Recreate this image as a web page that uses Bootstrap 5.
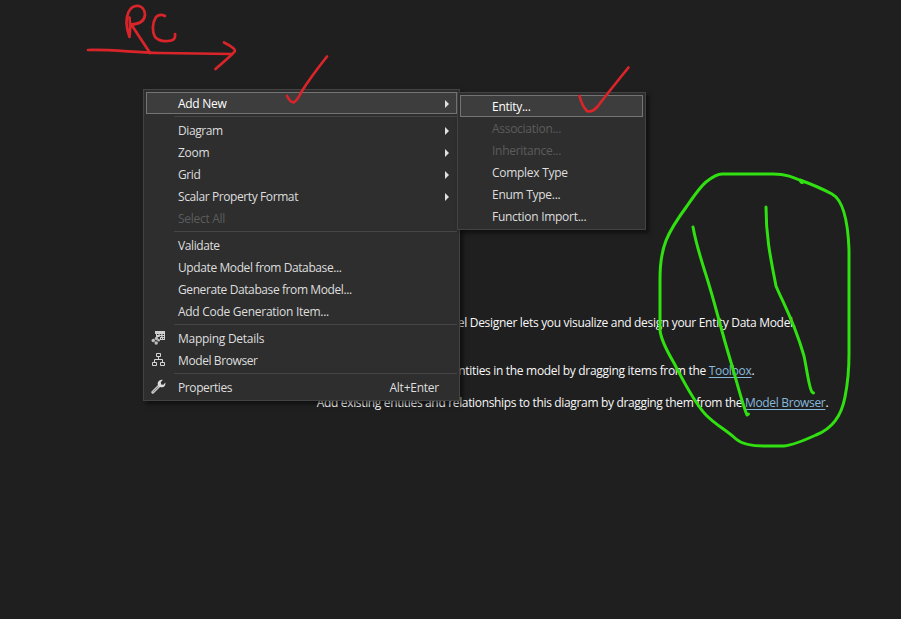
<!DOCTYPE html>
<html lang="en">
<head>
<meta charset="utf-8">
<meta name="viewport" content="width=device-width, initial-scale=1">
<title>Entity Data Model Designer</title>
<link href="https://cdn.jsdelivr.net/npm/bootstrap@5.3.0/dist/css/bootstrap.min.css" rel="stylesheet">
<style>
body{background:#1f1f1f;color:#f8f8f8;font:12px/22px "Open Sans","Noto Sans",sans-serif;height:619px}
.surface{width:901px;height:619px}
.hint{width:620px;margin-left:263px;padding-top:312px;letter-spacing:-.31px;white-space:nowrap}
.hint p{line-height:22px}
.hint .intro{margin-bottom:26px!important}
.hint .tip{margin-bottom:10px!important;padding-right:3px}
.hint .tip-last{letter-spacing:-.34px;padding-right:1px}
.hint a{color:#87b9dd;text-underline-offset:2px}
.ctx{position:absolute;background:#2e2e2e;border:1px solid #434343;padding:2px;box-shadow:3px 3px 4px rgba(0,0,0,.5)}
.ctx-main{left:143px;top:89px;width:317px}
.ctx-sub{left:457px;top:92px;width:189px}
.entry{height:22px;padding:2px 7px 0 0;border:1px solid transparent;color:#dedede;line-height:20px;letter-spacing:-.4px;white-space:nowrap}
.entry.airy,.ctx-sub .entry{letter-spacing:-.28px}
.entry.hot{background:#3d3d3d;border-color:#747474;color:#fff}
.entry.off{color:#5c5c5c}
.gutter{width:31px;height:20px;flex:none}
.gutter svg{display:block;margin:1px 0 0 4px}
.arrow{width:0;height:0;border:4px solid transparent;border-left-color:#e0e0e0;border-right:0}
.rule{height:1px;margin:2px 0 2px 28px;background:#454545}
.keys{margin-right:10px;letter-spacing:-.24px}
.ink{left:0;top:0;pointer-events:none}
</style>
<script src="https://cdn.jsdelivr.net/npm/bootstrap@5.3.0/dist/js/bootstrap.bundle.min.js"></script>
</head>
<body class="m-0 overflow-hidden">
<main class="surface position-relative overflow-hidden">
  <section class="hint text-center">
    <p class="intro"><span>The Entity Data Model Designer lets you visualize and design your Entity Data Model.</span></p>
    <p class="tip"><span>Create new entities in the model by dragging items from the <a href="#">Toolbox</a>.</span></p>
    <p class="tip-last mb-0"><span>Add existing entities and relationships to this diagram by dragging them from the <a href="#">Model Browser</a>.</span></p>
  </section>

  <div class="ctx ctx-main" role="menu">
    <div class="entry airy hot d-flex align-items-center"><span class="gutter"></span><span class="me-auto">Add New</span><i class="arrow"></i></div>
    <div class="rule"></div>
    <div class="entry d-flex align-items-center"><span class="gutter"></span><span class="me-auto">Diagram</span><i class="arrow"></i></div>
    <div class="entry airy d-flex align-items-center"><span class="gutter"></span><span class="me-auto">Zoom</span><i class="arrow"></i></div>
    <div class="entry d-flex align-items-center"><span class="gutter"></span><span class="me-auto">Grid</span><i class="arrow"></i></div>
    <div class="entry d-flex align-items-center"><span class="gutter"></span><span class="me-auto">Scalar Property Format</span><i class="arrow"></i></div>
    <div class="entry airy off d-flex align-items-center"><span class="gutter"></span><span>Select All</span></div>
    <div class="rule"></div>
    <div class="entry d-flex align-items-center"><span class="gutter"></span><span>Validate</span></div>
    <div class="entry d-flex align-items-center"><span class="gutter"></span><span>Update Model from Database...</span></div>
    <div class="entry d-flex align-items-center"><span class="gutter"></span><span>Generate Database from Model...</span></div>
    <div class="entry airy d-flex align-items-center"><span class="gutter"></span><span>Add Code Generation Item...</span></div>
    <div class="rule"></div>
    <div class="entry airy d-flex align-items-center"><span class="gutter"><svg width="16" height="16" viewBox="0 0 16 16"><path fill="#d0d0d0" d="M4 1h10v9H9V7H5V4H4z"/><path fill="#2e2e2e" d="M6 4h1.500v1H6zM8.700 4h1.500v1H8.700zM11.500 4h1.500v1h-1.500zM8.700 6h1.500v1H8.700zM11.500 6h1.500v1h-1.500zM10 8h1v1h-1zM12 8h1v1h-1z"/><g fill="#bdbdbd"><circle cx="2.300" cy="10.500" r="1.800"/><circle cx="5.500" cy="8.500" r="1.700"/><circle cx="7.700" cy="10.300" r="1.300"/><circle cx="5.200" cy="13" r="1.700"/></g></svg></span><span>Mapping Details</span></div>
    <div class="entry d-flex align-items-center"><span class="gutter"><svg width="16" height="16" viewBox="0 0 16 16" fill="none" stroke="#d6d6d6"><path d="M5.500 1.500h4v3h-4zM1.500 10.500h4v3h-4zM9.500 10.500h4v3h-4zM7.500 5v3M3.500 10V7.500h8V10"/></svg></span><span>Model Browser</span></div>
    <div class="rule"></div>
    <div class="entry d-flex align-items-center"><span class="gutter"><svg width="16" height="16" viewBox="0 0 16 16"><path d="M1.800 13.200 8 7" stroke="#c8c8c8" stroke-width="3" stroke-linecap="round"/><path d="M2 13 7.500 7.500" stroke="#777" stroke-width=".8"/><path fill="#dedede" d="M11.800.9 9.800 3.100l.3 2.400 2.300.2L14.300 3.500c.6 2.800-1.400 5.200-4.200 4.800C7.500 8 6 5.600 7 3.300 7.800 1.400 9.800.4 11.800.9z"/></svg></span><span class="me-auto">Properties</span><span class="keys">Alt+Enter</span></div>
  </div>

  <div class="ctx ctx-sub" role="menu">
    <div class="entry hot d-flex align-items-center"><span class="gutter"></span><span>Entity...</span></div>
    <div class="entry off d-flex align-items-center"><span class="gutter"></span><span>Association...</span></div>
    <div class="entry off d-flex align-items-center"><span class="gutter"></span><span>Inheritance...</span></div>
    <div class="entry d-flex align-items-center"><span class="gutter"></span><span>Complex Type</span></div>
    <div class="entry d-flex align-items-center"><span class="gutter"></span><span>Enum Type...</span></div>
    <div class="entry d-flex align-items-center"><span class="gutter"></span><span>Function Import...</span></div>
  </div>

  <!-- Pen annotations over the designer -->
  <svg class="ink position-absolute" width="901" height="619" viewBox="0 0 901 619" fill="none" stroke-linecap="round" stroke-linejoin="round">
    <g stroke="#d92529" stroke-width="2.700">
      <path d="M88 50C113 49.500 129 52 160 53L232 54"/>
      <path d="M224 42.500Q235 48 235 51Q233 54 215.500 69"/>
      <path d="M129.500 17.500Q131 27 129.500 37Q124 22 128.500 12Q132 5 139 6Q145 8 145 15Q144 24 131 24.500M131 24L150 53"/>
      <path d="M165 16Q160 13.500 156 17C152 23 152 31 155 37Q160 42 168 41Q176 41 175 34"/>
      <path d="M287 96Q290 102 293.500 102.500Q297 101 302 91Q310 78 327 56.500"/>
      <path d="M579.500 96Q582 106 587 111Q592 113 598 106Q607 94 628.500 67.500"/>
    </g>
    <g stroke="#30e010" stroke-width="3">
      <path d="M804 182C793 177 786 174 773 174H722Q716 174 706 182Q700 187 687 206C667 233 660 247 660 279V330Q661 341 674 363C683 380 693 401 706 415C717 426 725 429 736 439Q744 446 764 446H784Q794 445 816 435C834 428 842 413 845 397Q849 377 849 354V250C848 221 843 200 832 194Q819 187 800 180"/>
      <path d="M801 181L802 182" stroke-width="4"/>
      <path d="M693 227C696 244 700 256 706 275C715 303 720 326 730 359C737 382 742 403 747 415L748.500 414"/>
      <path d="M766 207C766 238 771 260 776 286C783 303 794 321 804 356C807 370 809 388 812 392L813.500 393"/>
    </g>
  </svg>
</main>
</body>
</html>
